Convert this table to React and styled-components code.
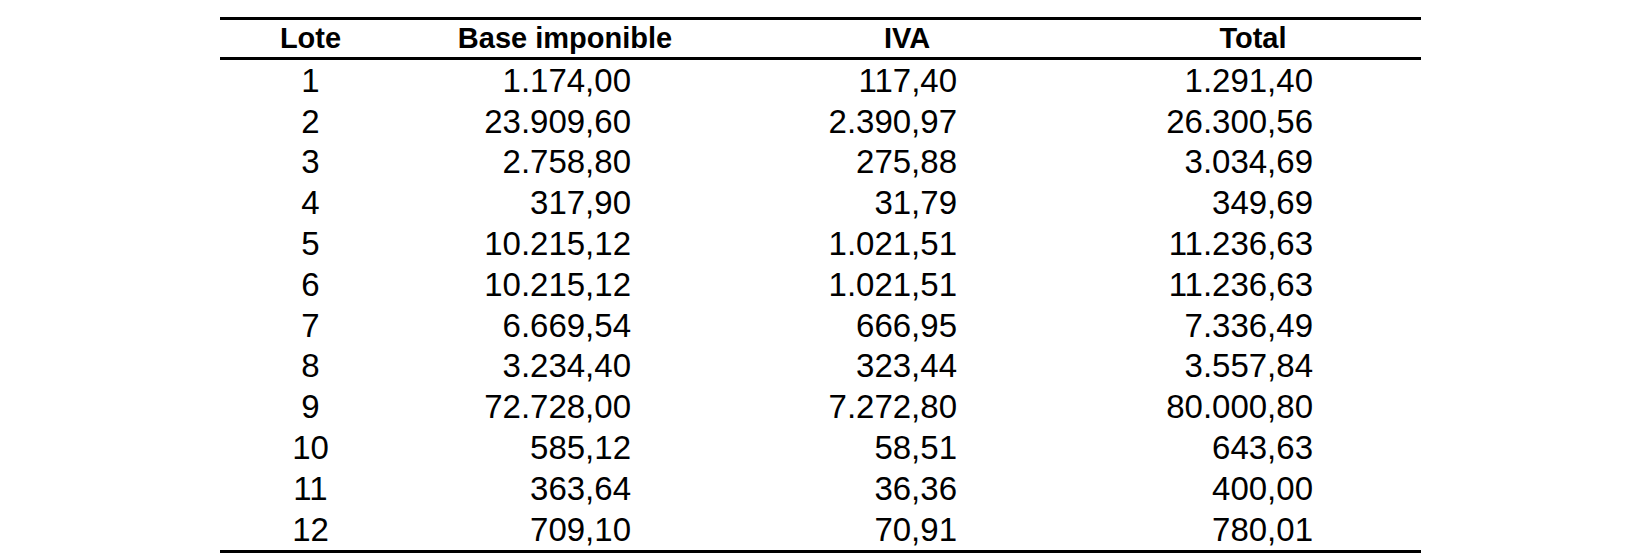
import React from "react";
import styled, { createGlobalStyle } from "styled-components";

const Global = createGlobalStyle`
  html, body { margin: 0; padding: 0; background: #fff; }
  body { font-family: "Liberation Sans", Arial, Helvetica, sans-serif; color: #000; }
`;

const Page = styled.div`
  width: 1648px;
  height: 560px;
  padding-top: 17px;
  padding-left: 220px;
  box-sizing: border-box;
`;

const Table = styled.div`
  width: 1201px;
  border-top: 3px solid #000;
  border-bottom: 3px solid #000;
`;

const Row = styled.div`
  display: grid;
  grid-template-columns: 181px 328px 356px 336px;
  height: ${(p) => (p.$head ? "37px" : "40.8px")};
  align-items: center;
  border-bottom: ${(p) => (p.$head ? "3px solid #000" : "none")};
`;

const HeadCell = styled.div`
  text-align: center;
  font-weight: 700;
  font-size: 29px;
  line-height: 1;
`;

const Cell = styled.div`
  font-size: 33px;
  line-height: 1;
  text-align: ${(p) => (p.$center ? "center" : "right")};
  padding-right: ${(p) => p.$pr || 0}px;
`;

const rows = [
  ["1", "1.174,00", "117,40", "1.291,40"],
  ["2", "23.909,60", "2.390,97", "26.300,56"],
  ["3", "2.758,80", "275,88", "3.034,69"],
  ["4", "317,90", "31,79", "349,69"],
  ["5", "10.215,12", "1.021,51", "11.236,63"],
  ["6", "10.215,12", "1.021,51", "11.236,63"],
  ["7", "6.669,54", "666,95", "7.336,49"],
  ["8", "3.234,40", "323,44", "3.557,84"],
  ["9", "72.728,00", "7.272,80", "80.000,80"],
  ["10", "585,12", "58,51", "643,63"],
  ["11", "363,64", "36,36", "400,00"],
  ["12", "709,10", "70,91", "780,01"],
];

const pads = [0, 98, 128, 108];

export default function App() {
  return (
    <>
      <Global />
      <Page>
        <Table>
          <Row $head>
            <HeadCell>Lote</HeadCell>
            <HeadCell>Base imponible</HeadCell>
            <HeadCell>IVA</HeadCell>
            <HeadCell>Total</HeadCell>
          </Row>
          {rows.map((r) => (
            <Row key={r[0]}>
              {r.map((v, i) => (
                <Cell key={i} $center={i === 0} $pr={pads[i]}>
                  {v}
                </Cell>
              ))}
            </Row>
          ))}
        </Table>
      </Page>
    </>
  );
}
